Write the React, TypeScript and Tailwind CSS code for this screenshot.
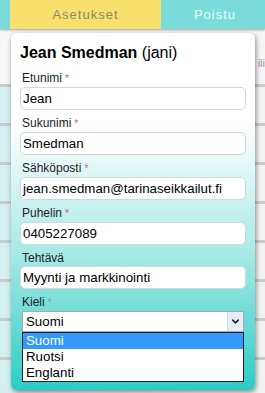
import { ChevronDown } from 'lucide-react'

const fields = [
  { label: 'Etunimi', value: 'Jean', required: true },
  { label: 'Sukunimi', value: 'Smedman', required: true },
  { label: 'Sähköposti', value: 'jean.smedman@tarinaseikkailut.fi', required: true },
  { label: 'Puhelin', value: '0405227089', required: true },
  { label: 'Tehtävä', value: 'Myynti ja markkinointi', required: false },
]

const languages = ['Suomi', 'Ruotsi', 'Englanti']

export default function App() {
  return (
    <div className="relative w-[265px] h-[393px] overflow-hidden bg-[#f6f6f6] font-['Liberation_Sans',Arial,sans-serif]">
      {/* top nav */}
      <div className="flex h-[29px] bg-[#79dbda] shadow-[0_1px_2px_rgba(0,0,0,0.35)]">
        <div className="w-[10px]" />
        <div className="w-[151px] flex items-center justify-center bg-[#f8e06c] text-[13px] tracking-[1px] text-[#8c8a6c]">
          Asetukset
        </div>
        <div className="flex-1 flex items-center justify-center pl-[4px] text-[13px] tracking-[1px] text-[#eaffff]">
          Poistu
        </div>
      </div>

      {/* page behind the popup */}
      <div className="flex flex-col mt-[2px]">
        <div className="h-[53px] flex items-start justify-end pt-[24px] text-[11px] text-[#999]">ili</div>
        {Array.from({ length: 8 }).map((_, i) => (
          <div key={i} className="h-[39px] border-t-[3px] border-[#c9cccc] bg-[linear-gradient(to_right,#d4f0f0_0,#d4f0f0_20px,#f3f3f3_240px)]" />
        ))}
      </div>

      {/* popup */}
      <div className="absolute left-[11px] top-[33px] w-[244px] h-[357px] rounded-[6px] shadow-[1px_2px_5px_rgba(0,0,0,0.45)] bg-[linear-gradient(to_bottom,#ffffff_0%,#ffffff_25%,#a6e9e6_62%,#2cccc5_100%)] px-[9px] pt-[10px]">
        <div className="text-[16px] leading-[20px] text-black">
          <span className="font-bold">Jean Smedman</span> (jani)
        </div>

        <div className="flex flex-col mt-[8px]">
          {fields.map(f => (
            <div key={f.label} className="flex flex-col mb-[6px]">
              <div className="text-[12px] leading-[14px] text-[#222] pl-[2px]">
                {f.label}
                {f.required && <span className="text-[#c46a6a] text-[10px] ml-[3px]">*</span>}
              </div>
              <div className="mt-[1px] h-[23px] rounded-[5px] border border-[#d6d6d6] bg-white flex items-center pl-[2px] text-[13.3px] text-black">
                {f.value}
              </div>
            </div>
          ))}

          <div className="flex flex-col">
            <div className="text-[12px] leading-[14px] text-[#222] pl-[2px]">
              Kieli<span className="text-[#8aa] text-[10px] ml-[3px]">*</span>
            </div>
            <div className="mt-[1px] mx-[2px] h-[21px] border border-[#a9a9a9] bg-white flex items-center text-[13.3px] text-black">
              <span className="flex-1 pl-[3px]">Suomi</span>
              <span className="w-[16px] h-[19px] flex items-center justify-center bg-[#e6eef8] border-l border-[#d0d8e2]">
                <ChevronDown size={11} strokeWidth={3.5} className="text-[#223]" />
              </span>
            </div>
            <div className="mx-[2px] border border-[#222] bg-white text-[13.3px] leading-[16px]">
              {languages.map((l, i) => (
                <div key={l} className={i === 0 ? 'bg-[#3399ff] text-white pl-[3px]' : 'text-black pl-[3px]'}>
                  {l}
                </div>
              ))}
            </div>
          </div>
        </div>
      </div>
    </div>
  )
}
